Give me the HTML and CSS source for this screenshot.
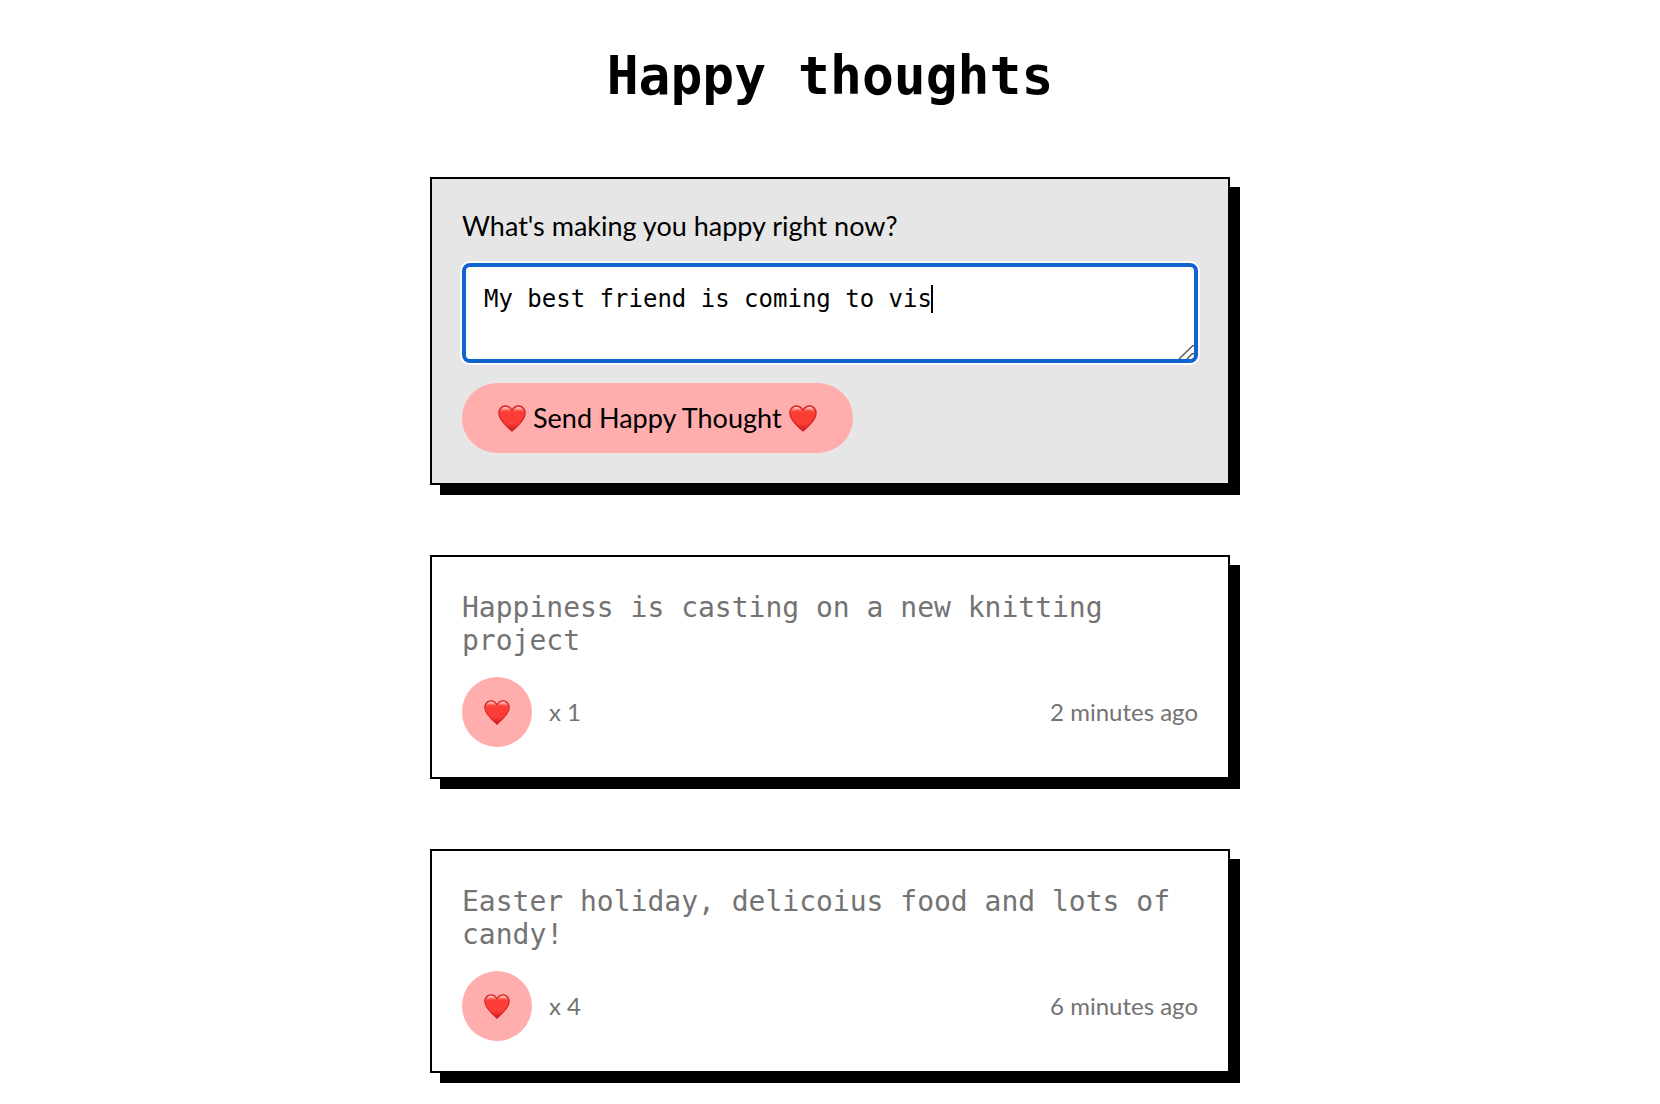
FILE: index.html
```html
<!DOCTYPE html>
<html lang="en">
<head>
<meta charset="utf-8">
<meta name="viewport" content="width=device-width, initial-scale=1">
<title>Happy thoughts</title>
<link rel="stylesheet" href="styles.css">
</head>
<body>
<svg class="defs" aria-hidden="true">
  <defs>
    <linearGradient id="heart-fill" x1="0" y1="0" x2="0" y2="1">
      <stop offset="0" stop-color="#f8564e"/>
      <stop offset="0.3" stop-color="#fc3d36"/>
      <stop offset="0.7" stop-color="#fb3d37"/>
      <stop offset="1" stop-color="#c2151a"/>
    </linearGradient>
    <linearGradient id="heart-shine" x1="0" y1="0" x2="0" y2="1">
      <stop offset="0" stop-color="#ffe9e4" stop-opacity="0.95"/>
      <stop offset="1" stop-color="#ff8a80" stop-opacity="0"/>
    </linearGradient>
    <symbol id="heart" viewBox="0 0 28 27">
      <path d="M14 26.200C10.800 23.400 6.500 19.300 3.800 15.700C1.800 13 .8 10.800 .8 8C.8 3.900 3.700 .9 7.300 .9C10.300 .9 12.600 2.500 14 5.200C15.400 2.500 17.700 .9 20.700 .9C24.300 .9 27.200 3.900 27.200 8C27.200 10.800 26.200 13 24.200 15.700C21.500 19.300 17.200 23.400 14 26.200Z" fill="url(#heart-fill)" stroke="#d32023" stroke-width="1.1" stroke-linejoin="round"/>
      <path d="M2.200 7.500C2.500 4 5 2 7.500 2C10 2 12 3.500 13.200 6.800C10 4.500 5.500 4.800 2.200 7.500Z" fill="url(#heart-shine)"/>
      <path d="M25.800 7.500C25.500 4 23 2 20.500 2C18 2 16 3.500 14.800 6.800C18 4.500 22.500 4.800 25.800 7.500Z" fill="url(#heart-shine)"/>
    </symbol>
  </defs>
</svg>
<main class="page">
  <h1 class="title">Happy thoughts</h1>

  <form class="card card-form">
    <label class="label" for="thought">What's making you happy right now?</label>
    <div class="field">
      <textarea class="input" id="thought" name="thought" spellcheck="false">My best friend is coming to vis</textarea>
      <span class="caret"></span>
      <svg class="grip" viewBox="0 0 16 14" aria-hidden="true"><path d="M1 14L15 .5H16M9 14L14 9L16 8.500" fill="none" stroke="#555" stroke-width="1.4"/></svg>
    </div>
    <button class="send" type="button">
      <svg class="send-heart" aria-hidden="true"><use href="#heart"/></svg>
      <span>Send Happy Thought</span>
      <svg class="send-heart" aria-hidden="true"><use href="#heart"/></svg>
    </button>
  </form>

  <article class="card">
    <p class="message">Happiness is casting on a new knitting project</p>
    <div class="meta">
      <button class="like" type="button" aria-label="Like"><svg class="like-heart" aria-hidden="true"><use href="#heart"/></svg></button>
      <span>x 1</span>
      <time class="time">2 minutes ago</time>
    </div>
  </article>

  <article class="card">
    <p class="message">Easter holiday, delicoius food and lots of candy!</p>
    <div class="meta">
      <button class="like" type="button" aria-label="Like"><svg class="like-heart" aria-hidden="true"><use href="#heart"/></svg></button>
      <span>x 4</span>
      <time class="time">6 minutes ago</time>
    </div>
  </article>
</main>
</body>
</html>
```

FILE: styles.css
```css
* { box-sizing: border-box; }

body {
  margin: 0;
  background: #fff;
  color: #000;
  font-family: Lato, sans-serif;
}

.defs {
  display: block;
  width: 0;
  height: 0;
}

.page {
  display: flex;
  flex-direction: column;
  gap: 70px;
  max-width: 840px;
  margin: 0 auto;
  padding: 45px 20px 20px;
}

.title {
  margin: 0;
  text-align: center;
  font: bold 53px/62px "DejaVu Sans Mono", monospace;
}

.card {
  display: flex;
  flex-direction: column;
  gap: 20px;
  padding: 34px 30px 30px;
  border: 2px solid #000;
  background: #fff;
  box-shadow: 10px 10px 0 #000;
}

.card-form {
  align-items: flex-start;
  padding-top: 30px;
  background: #e6e6e6;
}

.label {
  font-size: 27px;
  line-height: 34px;
}

.field {
  position: relative;
  width: 100%;
  font: 24px/28px "DejaVu Sans Mono", monospace;
}

.input {
  display: block;
  width: 100%;
  height: 100px;
  margin: 0;
  padding: 18px;
  border: 4px solid #1064cf;
  border-radius: 8px;
  outline: none;
  resize: none;
  overflow: hidden;
  background: #fff;
  color: #000;
  font: inherit;
  box-shadow: 0 0 0 2px #fff;
}

/* Text cursor after the 31 typed characters */
.caret {
  position: absolute;
  top: 22px;
  left: calc(21px + 31ch);
  width: 2px;
  height: 28px;
  background: #000;
}

.grip {
  position: absolute;
  right: 4px;
  bottom: 4px;
  width: 16px;
  height: 14px;
}

.send,
.like {
  display: flex;
  align-items: center;
  justify-content: center;
  height: 70px;
  margin: 0;
  border: 0;
  border-radius: 35px;
  background: #ffadad;
  color: #000;
}

.send {
  gap: 7px;
  padding: 0 36px;
  font: 27px/34px Lato, sans-serif;
}

.like {
  width: 70px;
  padding: 0;
}

.send-heart {
  width: 28px;
  height: 27px;
}

.like-heart {
  width: 26px;
  height: 25px;
}

.message {
  margin: 0;
  color: #737373;
  font: 28px/33px "DejaVu Sans Mono", monospace;
}

.meta {
  display: flex;
  align-items: center;
  gap: 17px;
  color: #737373;
  font-size: 24px;
  line-height: 30px;
}

.time { margin-left: auto; }
```
